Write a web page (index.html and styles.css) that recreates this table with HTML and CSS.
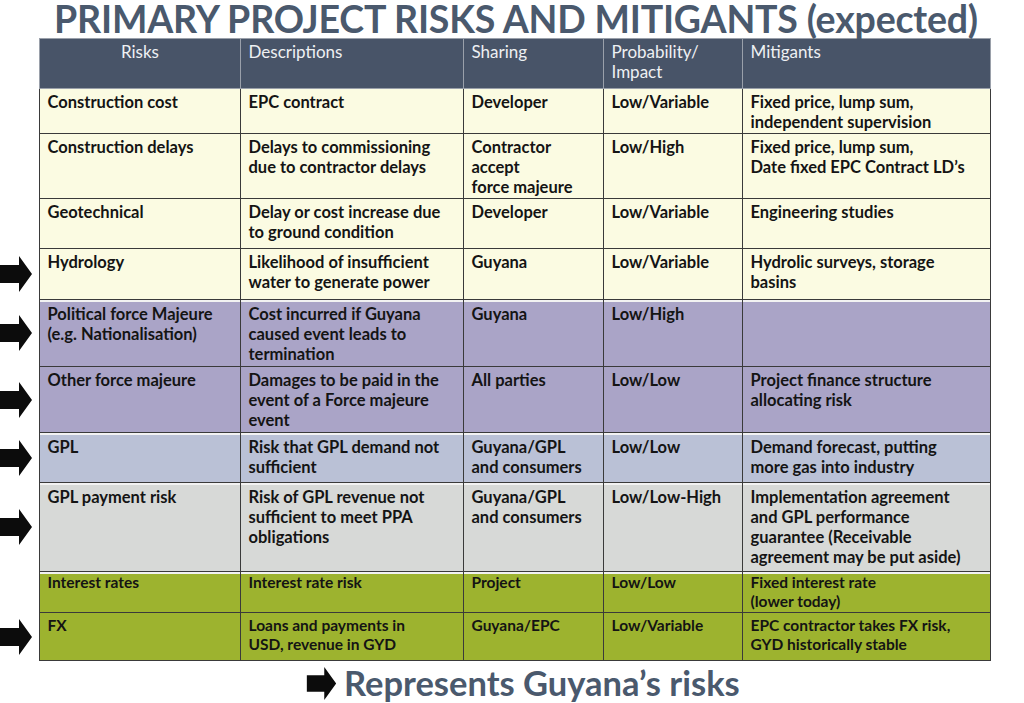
FILE: index.html
```html
<!DOCTYPE html>
<html>
<head>
<meta charset="utf-8">
<link rel="stylesheet" href="styles.css">
</head>
<body>
<h1 class="title">PRIMARY PROJECT RISKS AND MITIGANTS (expected)</h1>
<table class="risks">
  <colgroup>
    <col class="c-mark"><col class="c-risk"><col class="c-desc"><col class="c-share"><col class="c-prob"><col class="c-mit">
  </colgroup>
  <thead>
    <tr class="h-head">
      <td class="mark"></td>
      <th class="center">Risks</th>
      <th>Descriptions</th>
      <th>Sharing</th>
      <th>Probability/<br>Impact</th>
      <th>Mitigants</th>
    </tr>
  </thead>
  <tbody>
    <tr class="yellow h1">
      <td class="mark"></td>
      <td>Construction cost</td>
      <td>EPC contract</td>
      <td>Developer</td>
      <td>Low/Variable</td>
      <td>Fixed price, lump sum,<br>independent supervision</td>
    </tr>
    <tr class="yellow h2">
      <td class="mark"></td>
      <td>Construction delays</td>
      <td>Delays to commissioning<br>due to contractor delays</td>
      <td>Contractor<br>accept<br>force majeure</td>
      <td>Low/High</td>
      <td>Fixed price, lump sum,<br>Date fixed EPC Contract LD’s</td>
    </tr>
    <tr class="yellow h3">
      <td class="mark"></td>
      <td>Geotechnical</td>
      <td>Delay or cost increase due<br>to ground condition</td>
      <td>Developer</td>
      <td>Low/Variable</td>
      <td>Engineering studies</td>
    </tr>
    <tr class="yellow h4">
      <td class="mark"><svg class="arrow" viewBox="0 0 32 36"><path d="M0 9H19V0L32 18L19 36V27H0Z"/></svg></td>
      <td>Hydrology</td>
      <td>Likelihood of insufficient<br>water to generate power</td>
      <td>Guyana</td>
      <td>Low/Variable</td>
      <td>Hydrolic surveys, storage<br>basins</td>
    </tr>
    <tr class="purple h5 group">
      <td class="mark"><svg class="arrow" viewBox="0 0 32 36"><path d="M0 9H19V0L32 18L19 36V27H0Z"/></svg></td>
      <td>Political force Majeure<br>(e.g. Nationalisation)</td>
      <td>Cost incurred if Guyana<br>caused event leads to<br>termination</td>
      <td>Guyana</td>
      <td>Low/High</td>
      <td></td>
    </tr>
    <tr class="purple h6">
      <td class="mark"><svg class="arrow" viewBox="0 0 32 36"><path d="M0 9H19V0L32 18L19 36V27H0Z"/></svg></td>
      <td>Other force majeure</td>
      <td>Damages to be paid in the<br>event of a Force majeure<br>event</td>
      <td>All parties</td>
      <td>Low/Low</td>
      <td>Project finance structure<br>allocating risk</td>
    </tr>
    <tr class="blue h7 group">
      <td class="mark"><svg class="arrow" viewBox="0 0 32 36"><path d="M0 9H19V0L32 18L19 36V27H0Z"/></svg></td>
      <td>GPL</td>
      <td>Risk that GPL demand not<br>sufficient</td>
      <td>Guyana/GPL<br>and consumers</td>
      <td>Low/Low</td>
      <td>Demand forecast, putting<br>more gas into industry</td>
    </tr>
    <tr class="grey h8 group">
      <td class="mark"><svg class="arrow" viewBox="0 0 32 36"><path d="M0 9H19V0L32 18L19 36V27H0Z"/></svg></td>
      <td>GPL payment risk</td>
      <td>Risk of GPL revenue not<br>sufficient to meet PPA<br>obligations</td>
      <td>Guyana/GPL<br>and consumers</td>
      <td>Low/Low-High</td>
      <td>Implementation agreement<br>and GPL performance<br>guarantee (Receivable<br>agreement may be put aside)</td>
    </tr>
    <tr class="green h9 group">
      <td class="mark"></td>
      <td>Interest rates</td>
      <td>Interest rate risk</td>
      <td>Project</td>
      <td>Low/Low</td>
      <td>Fixed interest rate<br>(lower today)</td>
    </tr>
    <tr class="green h10">
      <td class="mark"><svg class="arrow" viewBox="0 0 32 36"><path d="M0 9H19V0L32 18L19 36V27H0Z"/></svg></td>
      <td>FX</td>
      <td>Loans and payments in<br>USD, revenue in GYD</td>
      <td>Guyana/EPC</td>
      <td>Low/Variable</td>
      <td>EPC contractor takes FX risk,<br>GYD historically stable</td>
    </tr>
  </tbody>
</table>
<div class="legend">
  <svg class="arrow legend-arrow" viewBox="0 0 32 36"><path d="M0 9H19V0L32 18L19 36V27H0Z"/></svg>
  <span class="legend-text">Represents Guyana’s risks</span>
</div>
</body>
</html>
```
FILE: styles.css
```css
html, body {
  margin: 0;
  padding: 0;
  background: #ffffff;
}
body {
  width: 1024px;
  height: 703px;
  overflow: hidden;
  font-family: "Lato", "Liberation Sans", sans-serif;
  color: #141414;
}
.title {
  margin: 0;
  height: 38px;
  padding-left: 8px;
  text-align: center;
  font-size: 37.5px;
  line-height: 38px;
  font-weight: 700;
  color: #4a596d;
  white-space: nowrap;
  letter-spacing: -0.2px;
}
.risks {
  width: 990px;
  table-layout: fixed;
  border-collapse: collapse;
  font-size: 16.5px;
  line-height: 20px;
}
.c-mark { width: 39px; }
.c-risk { width: 201px; }
.c-desc { width: 223px; }
.c-share { width: 140px; }
.c-prob { width: 139px; }
.c-mit { width: 248px; }
.risks th, .risks td {
  border: 1px solid #3a3a3a;
  vertical-align: top;
  text-align: left;
  padding: 3px 7px 0 8px;
  font-weight: 700;
  white-space: nowrap;
}
.risks td.mark {
  border: none;
  background: #ffffff;
  padding: 0;
  vertical-align: middle;
}
.risks th {
  background: #485468;
  color: #eef0f3;
  font-weight: 400;
  font-size: 17px;
  border-color: #9aa0aa;
}
.risks th.center { text-align: center; }
.h-head { height: 50px; }
.h1 { height: 45px; }
.h2 { height: 65px; }
.h3 { height: 50px; }
.h4 { height: 51px; }
.h5 { height: 67px; }
.h6 { height: 66px; }
.h7 { height: 50px; }
.h8 { height: 89px; }
.h9 { height: 41px; }
.h10 { height: 48px; }
.yellow td { background: #fbfbe2; }
.purple td { background: #aaa4c7; }
.blue td { background: #bac1d6; }
.grey td { background: #d7d9d7; }
.green td {
  background: #9db32f;
  font-size: 15.5px;
  font-weight: 700;
  line-height: 19px;
}
.group td:not(.mark) {
  box-shadow: inset 0 2px 0 #f2f2f2;
  padding-top: 4px;
}
.green.group td:not(.mark) {
  padding-top: 1px;
}
.arrow {
  display: block;
  width: 32px;
  height: 36px;
  fill: #0c0c0c;
}
.legend {
  display: flex;
  align-items: center;
  gap: 6px;
  margin-top: 5px;
  padding-left: 305px;
}
.legend-arrow {
  width: 33px;
  height: 33px;
}
.legend-text {
  font-size: 34.5px;
  line-height: 34px;
  font-weight: 700;
  color: #4a596d;
}
```
